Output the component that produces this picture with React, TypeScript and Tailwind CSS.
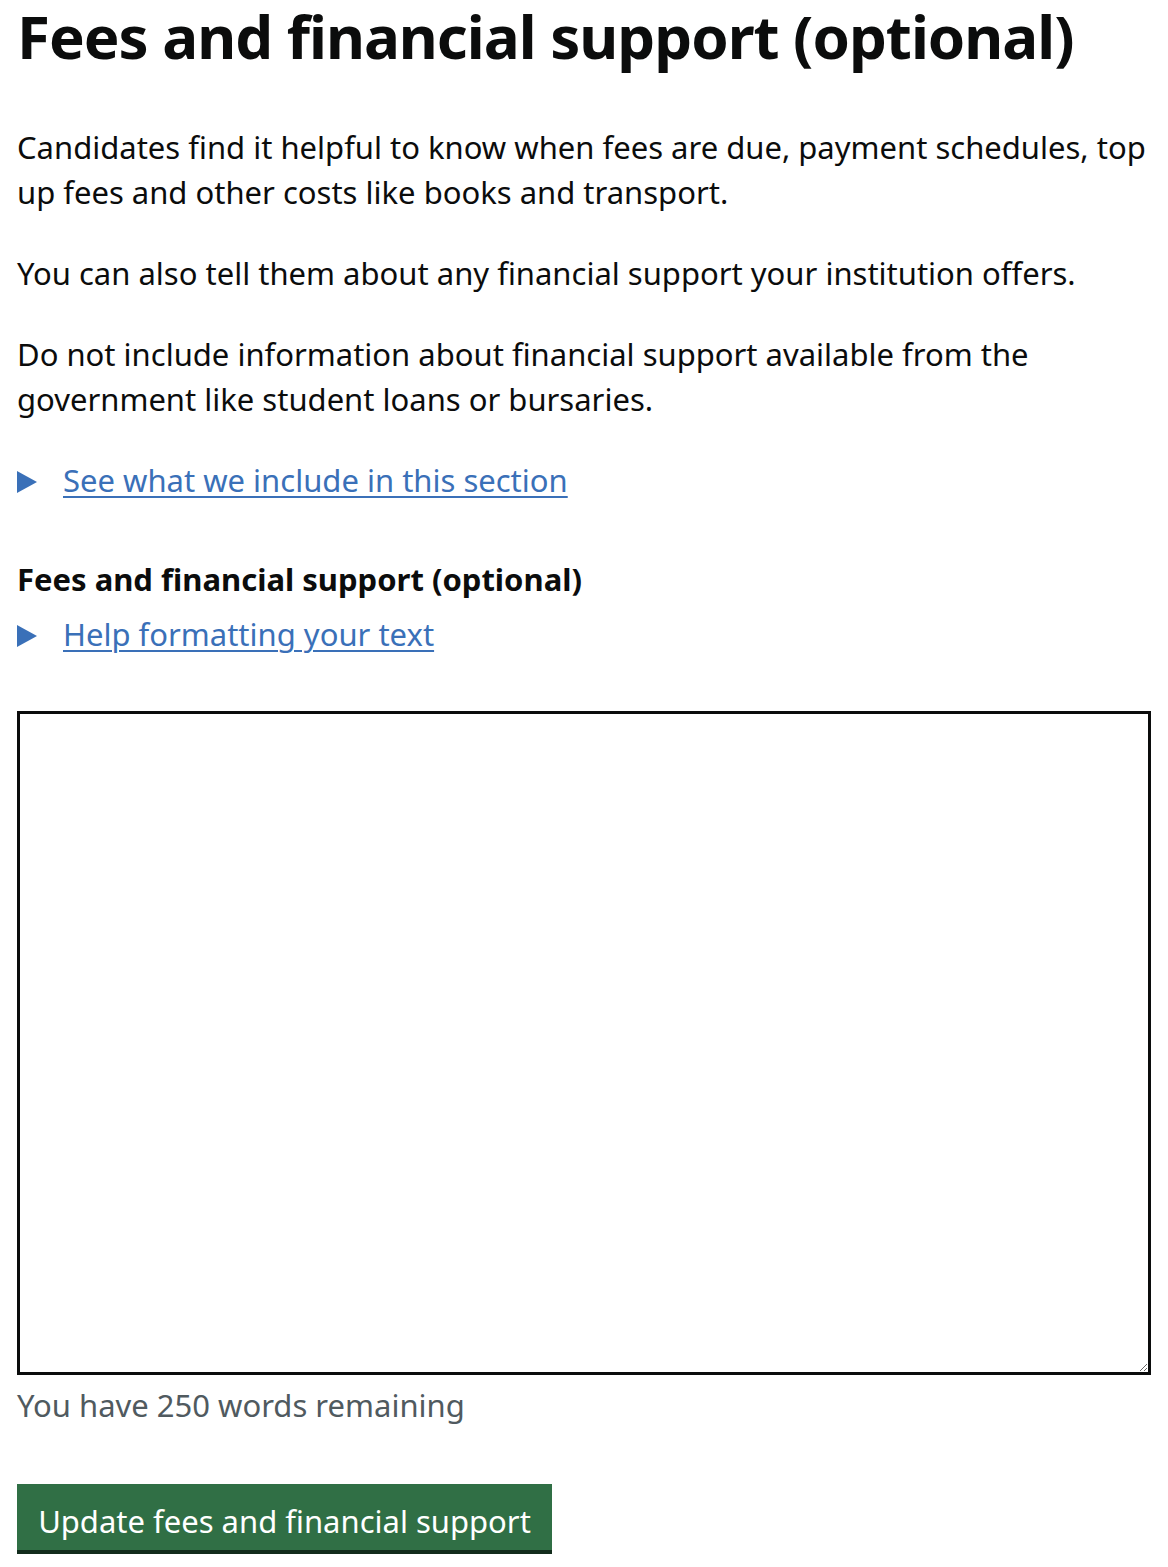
import React from "react";

function Summary({ text }: { text: string }) {
  return (
    <div className="flex items-start">
      <svg width="20" height="22" viewBox="0 0 20 22" className="mt-[13px] shrink-0" aria-hidden="true">
        <polygon points="0,0 20,11 0,22" fill="#3a70b8" />
      </svg>
      <a
        href="#"
        className="ml-[26px] text-[#3a70b8] underline decoration-[2px] underline-offset-[4px]"
      >
        {text}
      </a>
    </div>
  );
}

export default function App() {
  return (
    <div className="min-h-screen bg-white px-[17px] text-[#0b0c0c] font-['Noto_Sans',sans-serif]">
      <h1 className="text-[60px] font-bold leading-[72px] tracking-[-1px]">
        Fees and financial support (optional)
      </h1>
      <div className="text-[31px] leading-[45px]">
        <p className="mt-[53px]">
          Candidates find it helpful to know when fees are due, payment schedules, top up fees and other costs like
          books and transport.
        </p>
        <p className="mt-[36px]">You can also tell them about any financial support your institution offers.</p>
        <p className="mt-[36px]">
          Do not include information about financial support available from the government like student loans or
          bursaries.
        </p>
        <div className="mt-[36px]">
          <Summary text="See what we include in this section" />
        </div>
        <label className="mt-[54px] block font-bold">Fees and financial support (optional)</label>
        <div className="mt-[10px]">
          <Summary text="Help formatting your text" />
        </div>
        <textarea className="mt-[54px] block h-[664px] w-full border-[3px] border-[#0b0c0c] bg-white p-2 outline-none" />
        <p className="mt-[8px] text-[#505a5f]">You have 250 words remaining</p>
        <button className="mt-[56px] block h-[66px] w-[535px] bg-[#306f45] pt-[7px] text-center leading-[38px] text-white shadow-[0_4px_0_#122c1c]">
          Update fees and financial support
        </button>
      </div>
    </div>
  );
}
